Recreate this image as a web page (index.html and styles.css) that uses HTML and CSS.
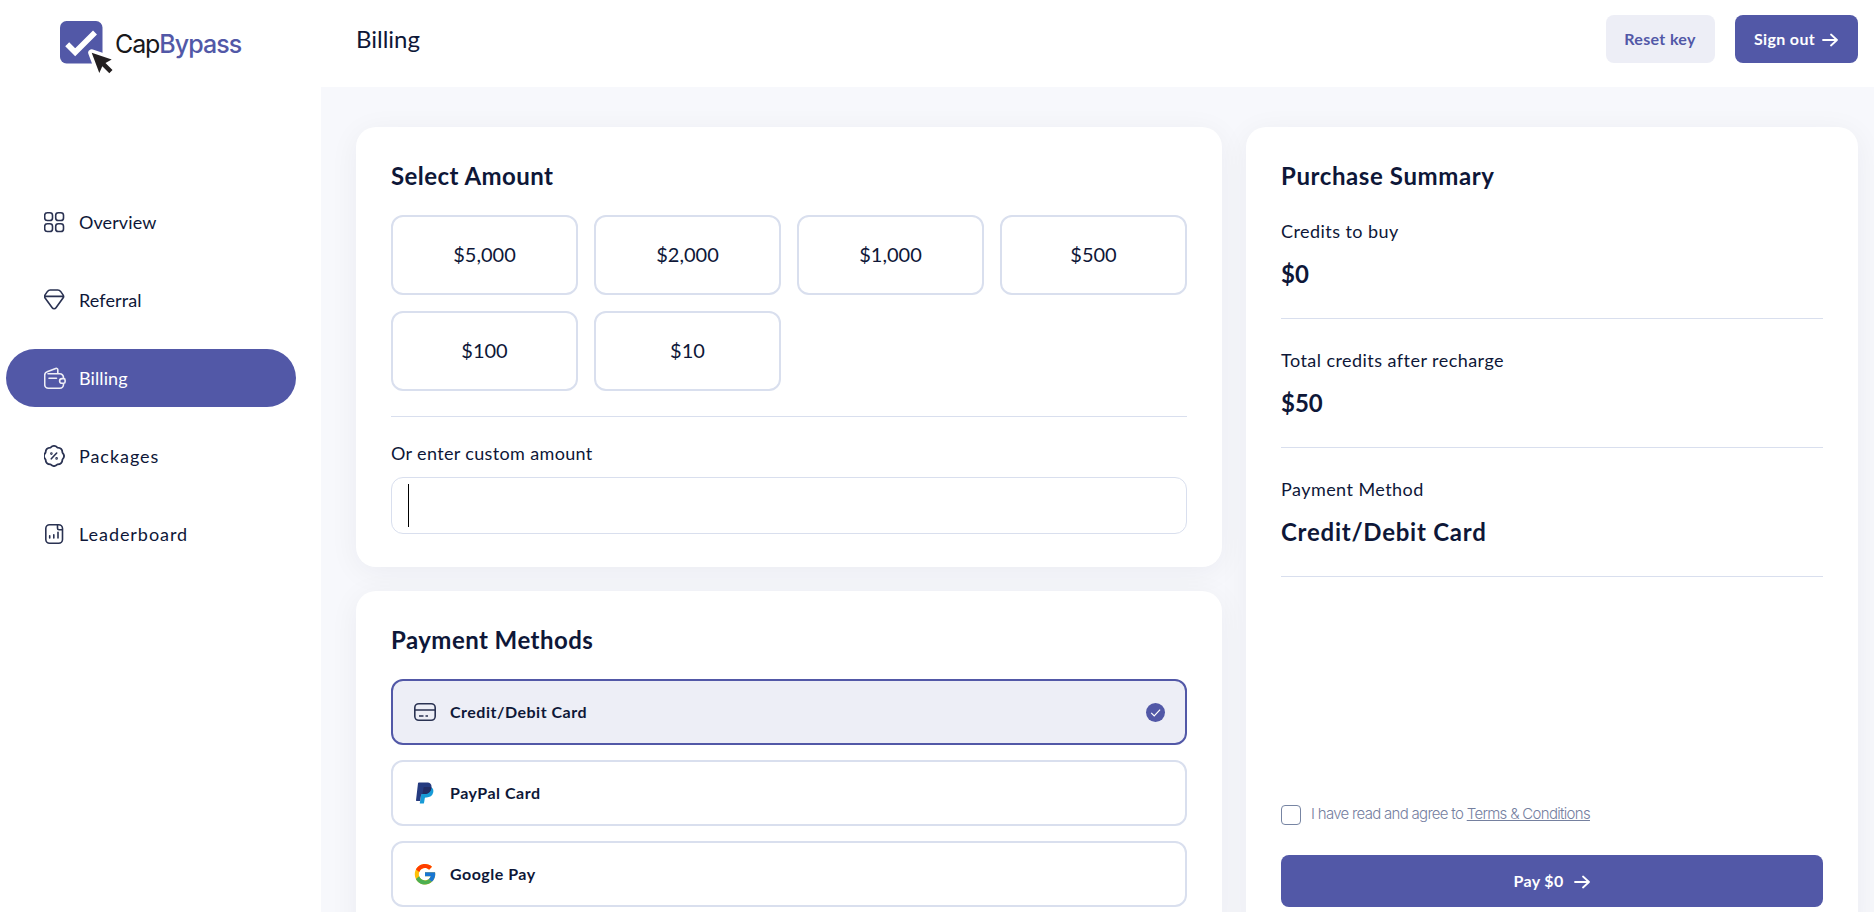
FILE: index.html
```html
<!DOCTYPE html>
<html lang="en">
<head>
<meta charset="UTF-8">
<meta name="viewport" content="width=device-width, initial-scale=1.0">
<title>CapBypass - Billing</title>
<link rel="stylesheet" href="styles.css">
</head>
<body>
  <div class="page">
    <aside class="sidebar">
      <a class="logo">
        <svg width="54" height="54" viewBox="0 0 54 54">
          <rect width="42.500" height="42.500" rx="6.500" fill="#5258a7"/>
          <path d="M7.200 23.200l8 8L35 11.400" fill="none" stroke="#fff" stroke-width="5.600"/>
          <path d="M31.700 31.700l20 6.800-6.200 3.500 7 6.900-3.200 3.300-7-7L39.300 52z" fill="#231f20" stroke="#fff" stroke-width="7" stroke-linejoin="round"/>
          <path d="M31.700 31.700l20 6.800-6.200 3.500 7 6.900-3.200 3.300-7-7L39.300 52z" fill="#231f20"/>
        </svg>
        <span class="logo-text">Cap<b>Bypass</b></span>
      </a>
      <nav class="menu">
        <a class="menu-item">
          <svg width="22" height="22" viewBox="0 0 22 22"><rect x=".7" y="1.700" width="7.800" height="7.800" rx="2.600"/><rect x="11.700" y="1.700" width="7.800" height="7.800" rx="2.600"/><rect x=".7" y="12.700" width="7.800" height="7.800" rx="2.600"/><rect x="11.700" y="12.700" width="7.800" height="7.800" rx="2.600"/></svg>
          <span>Overview</span>
        </a>
        <a class="menu-item">
          <svg width="22" height="22" viewBox="0 0 22 22"><path d="M6.200 1h7.600a3.500 3.500 0 0 1 2.800 1.400l2.600 3.700a2.300 2.300 0 0 1 0 2.600L12 18.800a2.300 2.300 0 0 1-3.800 0L.9 8.700a2.300 2.300 0 0 1 0-2.600l2.600-3.700A3.500 3.500 0 0 1 6.200 1zM.8 7.400h18.600"/></svg>
          <span>Referral</span>
        </a>
        <a class="menu-item active">
          <svg width="22" height="22" viewBox="0 0 22 22"><path d="M.7 9.500v8a3.700 3.700 0 0 0 3.700 3.700h11.400a3.700 3.700 0 0 0 3.700-3.700v-.8M19.500 11.300v-.8a3.700 3.700 0 0 0-3.700-3.700H4M.7 10.500V8.200c0-1.600.9-3 2.400-3.500l8.600-3.300c1.100-.4 2.100.3 2.100 1.400v4M5 11.200h7.500M21.100 13.200v1.600c0 .8-.6 1.400-1.400 1.400h-1.500c-1.600 0-2.600-1-2.600-2.300 0-1.400 1.100-2.300 2.500-2.300h1.600c.8 0 1.400.7 1.400 1.600z"/></svg>
          <span>Billing</span>
        </a>
        <a class="menu-item wide">
          <svg width="22" height="22" viewBox="0 0 22 22"><path d="M6.860 3.420Q10 .4 13.140 3.420Q17.500 3.500 17.580 7.860Q20.600 11 17.580 14.140Q17.500 18.500 13.140 18.580Q10 21.600 6.860 18.580Q2.500 18.500 2.420 14.140Q-.6 11 2.420 7.860Q2.500 3.500 6.860 3.420z" transform="translate(-1.100 -1.200) scale(1.110)"/><path d="M7.300 13.800l5.400-5.800"/><circle cx="7.400" cy="8.600" r=".5"/><circle cx="12.600" cy="13.400" r=".5"/></svg>
          <span>Packages</span>
        </a>
        <a class="menu-item wide">
          <svg width="22" height="22" viewBox="0 0 22 22"><rect x="1.800" y="1.700" width="16.700" height="18.600" rx="3.800"/><path d="M13.500 2v3.200c0 1 .6 1.500 1.500 1.500h3.300M5.700 12.800V15M9.800 11.800V15M14 9.300V15"/></svg>
          <span>Leaderboard</span>
        </a>
      </nav>
    </aside>

    <div class="main">
      <header class="topbar">
        <h1>Billing</h1>
        <div class="topbar-buttons">
          <button type="button" class="btn btn-light">Reset key</button>
          <button type="button" class="btn">Sign out <svg class="arrow" width="16" height="14" viewBox="0 0 16 14"><path d="M1 7h14M9 1.500L15 7l-6 5.500"/></svg></button>
        </div>
      </header>

      <div class="content">
        <div class="left">
          <section class="card">
            <h2>Select Amount</h2>
            <div class="amounts">
              <div class="amount">$5,000</div>
              <div class="amount">$2,000</div>
              <div class="amount">$1,000</div>
              <div class="amount">$500</div>
              <div class="amount">$100</div>
              <div class="amount">$10</div>
            </div>
            <div class="custom">
              <p>Or enter custom amount</p>
              <div class="custom-input"><span class="caret"></span></div>
            </div>
          </section>

          <section class="card card-methods">
            <h2>Payment Methods</h2>
            <div class="methods">
              <div class="method selected">
                <svg class="method-icon line" width="22" height="22" viewBox="0 0 22 22"><rect x=".8" y="2.700" width="20.400" height="16.600" rx="4"/><path d="M1 9h20M5 15h4.500M11.500 15h2.500"/></svg>
                <span>Credit/Debit Card</span>
                <svg class="check" width="19" height="19" viewBox="0 0 19 19"><circle cx="9.500" cy="9.500" r="9.500" fill="#5258a7"/><path d="M5.200 9.900l3 3 5.900-6.300" fill="none" stroke="#fff" stroke-width="1.200"/></svg>
              </div>
              <div class="method">
                <svg class="method-icon" width="22" height="22" viewBox="0 0 22 22">
                  <path d="M17.200 5.200c2.200 1.200 2.500 3.200 2 5.400-.8 3.300-3.300 4.900-6.600 4.900h-.9c-.5 0-.8.3-.9.800l-.8 4.600c-.1.400-.4.700-.8.700H6.300c-.4 0-.6-.3-.5-.7L8 8z" fill="#179bd7"/>
                  <path d="M4.900.4h7.700c3.800 0 5.500 2 4.800 5.600-.8 4.200-3.500 6.100-7.500 6.100H8.100c-.5 0-.9.300-1 .9L6.100 19H2.600c-.4 0-.7-.3-.6-.7L4 1.200c.1-.5.4-.8.900-.8z" fill="#253b80"/>
                  <path d="M9.500 5.700c.1-.5.4-.7.900-.7h4.600c.9 0 1.700.1 2.400.4-.5 4.600-3.300 6.700-7.500 6.700H8.500z" fill="#222d65"/>
                </svg>
                <span>PayPal Card</span>
              </div>
              <div class="method">
                <svg class="method-icon" width="22" height="22" viewBox="2.500 2 43 43">
                  <path fill="#FFC107" d="M43.611 20.083H42V20H24v8h11.303c-1.649 4.657-6.080 8-11.303 8-6.627 0-12-5.373-12-12s5.373-12 12-12c3.059 0 5.842 1.154 7.961 3.039l5.657-5.657C34.046 6.053 29.268 4 24 4 12.955 4 4 12.955 4 24s8.955 20 20 20 20-8.955 20-20c0-1.341-.138-2.650-.389-3.917z"/>
                  <path fill="#FF3D00" d="M6.306 14.691l6.571 4.819C14.655 15.108 18.961 12 24 12c3.059 0 5.842 1.154 7.961 3.039l5.657-5.657C34.046 6.053 29.268 4 24 4 16.318 4 9.656 8.337 6.306 14.691z"/>
                  <path fill="#4CAF50" d="M24 44c5.166 0 9.860-1.977 13.409-5.192l-6.190-5.238C29.211 35.091 26.715 36 24 36c-5.202 0-9.619-3.317-11.283-7.946l-6.522 5.025C9.505 39.556 16.227 44 24 44z"/>
                  <path fill="#1976D2" d="M43.611 20.083H42V20H24v8h11.303c-.792 2.237-2.231 4.166-4.087 5.571l6.193 5.238C36.971 39.205 44 34 44 24c0-1.341-.138-2.650-.389-3.917z"/>
                </svg>
                <span>Google Pay</span>
              </div>
            </div>
          </section>
        </div>

        <section class="card summary">
          <h2>Purchase Summary</h2>
          <div class="summary-row">
            <p>Credits to buy</p>
            <strong>$0</strong>
          </div>
          <div class="summary-row">
            <p>Total credits after recharge</p>
            <strong>$50</strong>
          </div>
          <div class="summary-row">
            <p>Payment Method</p>
            <strong class="method-name">Credit/Debit Card</strong>
          </div>
          <label class="terms">
            <span class="checkbox"></span>
            <span>I have read and agree to <a>Terms &amp; Conditions</a></span>
          </label>
          <button type="button" class="btn btn-pay">Pay $0 <svg class="arrow" width="16" height="14" viewBox="0 0 16 14"><path d="M1 7h14M9 1.500L15 7l-6 5.500"/></svg></button>
        </section>
      </div>
    </div>
  </div>
</body>
</html>
```
FILE: styles.css
```css
* {
  box-sizing: border-box;
}
body {
  margin: 0;
  font-family: Lato, sans-serif;
  font-size: 18px;
  line-height: 22px;
  color: #0e1738;
  background-color: #fff;
}
h1, h2, p {
  margin: 0;
}
.page {
  display: flex;
  height: 912px;
  overflow: hidden;
}

/* Sidebar */
.sidebar {
  width: 321px;
  flex-shrink: 0;
}
.logo {
  display: flex;
  gap: 1px;
  height: 75px;
  padding: 21px 0 0 60px;
}
.logo-text {
  font-family: Inter, sans-serif;
  font-size: 25px;
  line-height: 47px;
  letter-spacing: -1.1px;
  color: #18181a;
}
.logo-text b {
  font-weight: 500;
  letter-spacing: -0.95px;
  color: #5258a7;
}
.menu {
  display: flex;
  flex-direction: column;
  gap: 20px;
  padding: 118px 25px 0 6px;
}
.menu-item {
  display: flex;
  align-items: center;
  gap: 13px;
  height: 58px;
  padding-left: 38px;
  border-radius: 29px;
  letter-spacing: 0.1px;
}
.menu-item.wide {
  letter-spacing: 0.95px;
}
.menu-item.active {
  background-color: #5258a7;
  color: #fff;
}
.menu-item svg {
  fill: none;
  stroke: #2a3252;
  stroke-width: 1.6;
  stroke-linecap: round;
  stroke-linejoin: round;
}
.menu-item.active svg {
  stroke: #eeeef6;
}

/* Top bar */
.main {
  flex: 1;
  display: flex;
  flex-direction: column;
  background-color: #f7f8fc;
}
.topbar {
  display: flex;
  justify-content: space-between;
  height: 87px;
  flex-shrink: 0;
  padding: 15px 16px 0 35px;
  background-color: #fff;
}
.topbar h1 {
  font-size: 24px;
  font-weight: 400;
  line-height: 48px;
}
.topbar-buttons {
  display: flex;
  gap: 20px;
}
.btn {
  display: flex;
  align-items: center;
  justify-content: center;
  gap: 7px;
  width: 123px;
  height: 48px;
  padding: 0 1px 1px 0;
  border: none;
  border-radius: 8px;
  background-color: #5258a7;
  color: #fff;
  font-family: inherit;
  font-size: 16px;
  font-weight: 700;
  letter-spacing: 0.35px;
}
.btn-light {
  width: 109px;
  background-color: #edeef6;
  color: #5258a7;
}
.arrow {
  margin-top: 2px;
  fill: none;
  stroke: #fff;
  stroke-width: 1.8;
  stroke-linecap: round;
  stroke-linejoin: round;
}

/* Cards */
.content {
  display: flex;
  gap: 24px;
  height: 855px;
  flex-shrink: 0;
  padding: 40px 16px 0 35px;
}
.left {
  display: flex;
  flex-direction: column;
  gap: 24px;
  width: 866px;
}
.card {
  padding: 35px;
  border-radius: 20px;
  background-color: #fff;
  box-shadow: 0 5px 30px rgba(20, 20, 60, 0.055);
}
.card-methods {
  flex: 1;
}
.card h2 {
  font-size: 24px;
  line-height: 28px;
  letter-spacing: 0.45px;
}
.amounts {
  display: grid;
  grid-template-columns: repeat(4, 1fr);
  gap: 16px;
  padding: 25px 0;
  border-bottom: 1px solid #d9dfee;
}
.amount {
  display: flex;
  align-items: center;
  justify-content: center;
  height: 80px;
  padding-bottom: 2px;
  border: 2px solid #d9dfee;
  border-radius: 12px;
  font-size: 20px;
}
.custom {
  margin-bottom: -2px;
}
.custom p {
  margin: 25px 0 13px;
  letter-spacing: 0.35px;
}
.custom-input {
  height: 57px;
  padding: 6px 16px;
  border: 1px solid #d9dfee;
  border-radius: 12px;
}
.caret {
  display: block;
  width: 1px;
  height: 43px;
  background-color: #000;
}

/* Payment methods */
.methods {
  display: flex;
  flex-direction: column;
  gap: 15px;
  margin-top: 25px;
}
.method {
  display: flex;
  align-items: center;
  height: 66px;
  padding: 0 20px 0 57px;
  border: 2px solid #d9dfee;
  border-radius: 12px;
  font-size: 16px;
  font-weight: 700;
  letter-spacing: 0.5px;
}
.method.selected {
  border-color: #5258a7;
  background-color: #edeef6;
}
.method-icon {
  flex-shrink: 0;
  margin: 0 14px 0 -36px;
}
.method-icon.line {
  fill: none;
  stroke: #2a3252;
  stroke-width: 1.6;
}
.check {
  margin-left: auto;
}

/* Summary */
.summary {
  flex: 1;
  display: flex;
  flex-direction: column;
}
.summary h2 {
  letter-spacing: 0.6px;
}
.summary-row {
  padding: 30px 0;
  border-bottom: 1px solid #d9dfee;
}
.summary-row p {
  margin-bottom: 18px;
  letter-spacing: 0.45px;
}
.summary-row strong {
  display: block;
  font-size: 24px;
  line-height: 28px;
}
.summary-row .method-name {
  letter-spacing: 0.75px;
}
.terms {
  display: flex;
  gap: 10px;
  margin-top: auto;
  font-family: Inter, sans-serif;
  font-size: 15px;
  font-weight: 300;
  line-height: 18px;
  letter-spacing: -0.7px;
  color: #75809f;
}
.terms a {
  text-decoration: underline;
}
.checkbox {
  width: 20px;
  height: 20px;
  border: 1px solid #7785a3;
  border-radius: 4px;
}
.btn-pay {
  gap: 10px;
  width: 100%;
  height: 52px;
  flex-shrink: 0;
  margin-top: 30px;
}
```
